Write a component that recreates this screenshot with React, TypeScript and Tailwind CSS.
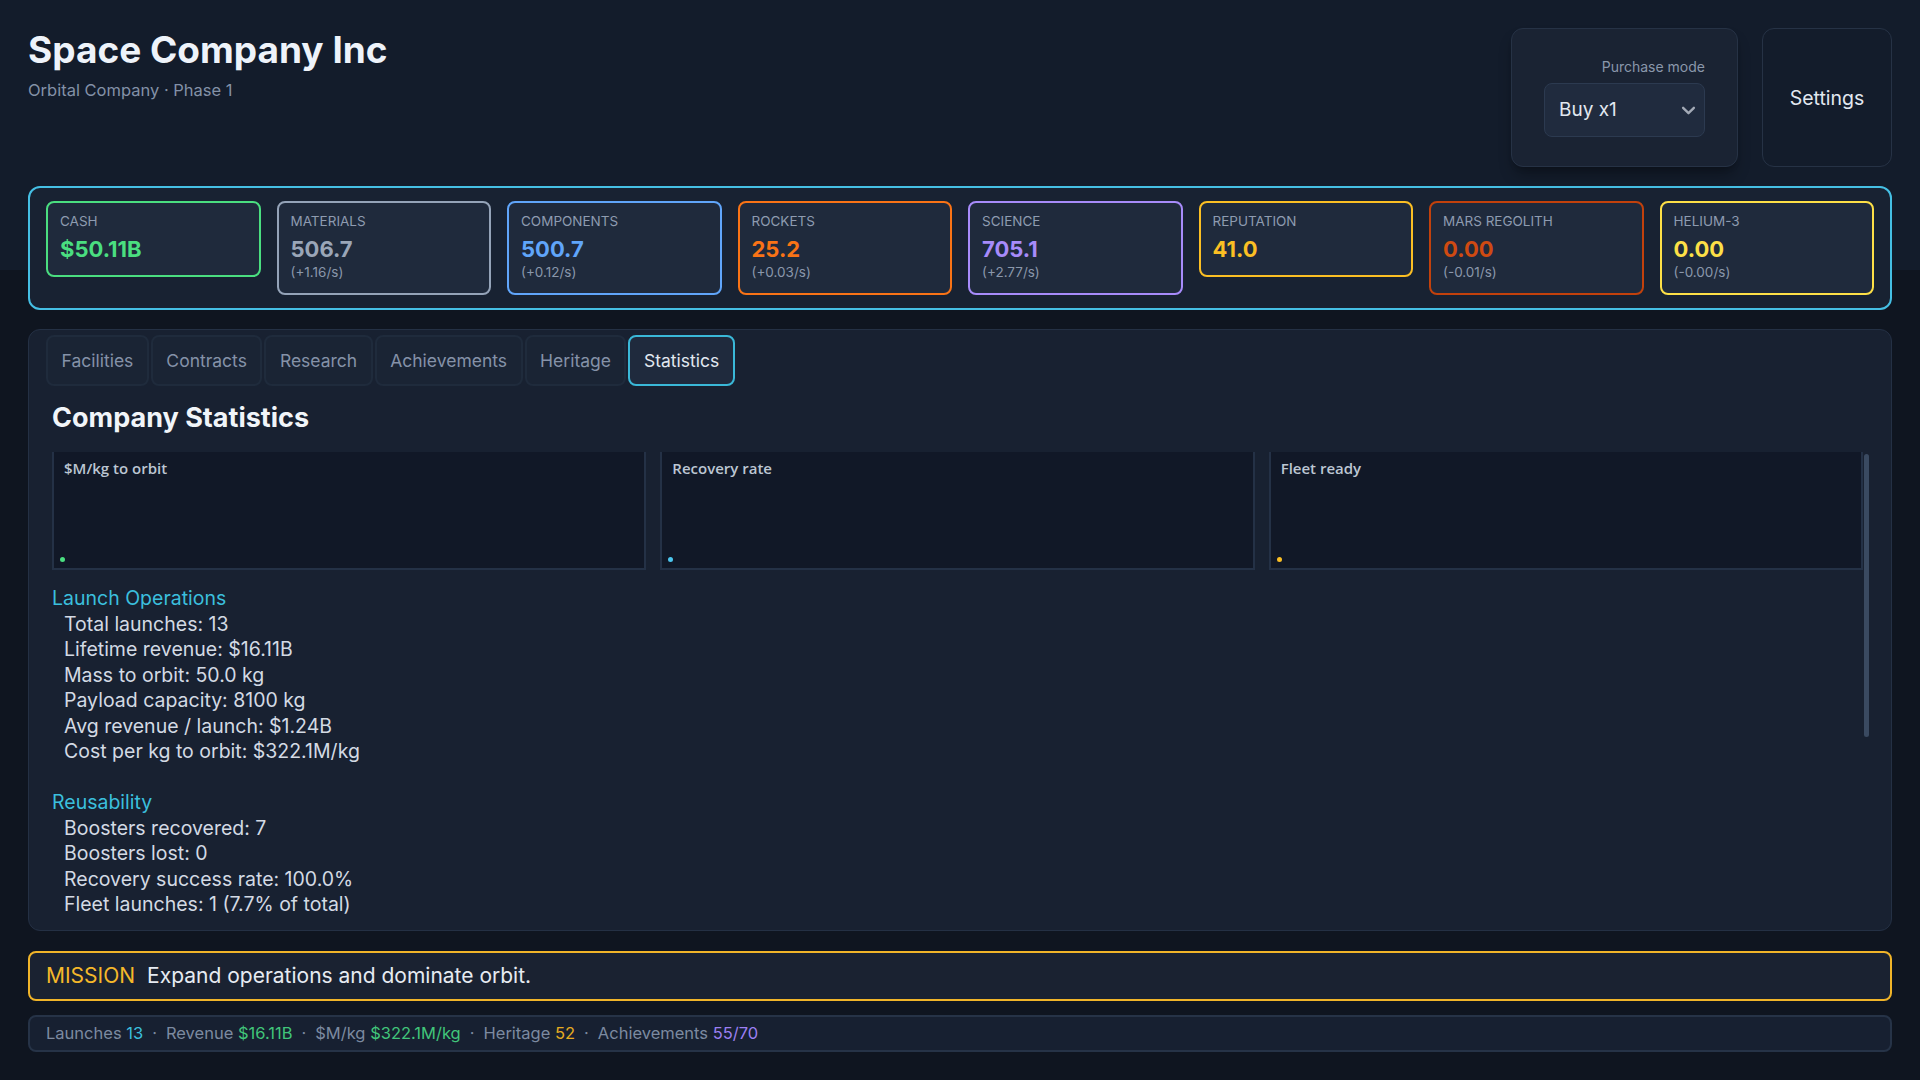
const resources = [
  { label: 'Cash', value: '$50.11B', border: 'border-[#4ade80]', text: 'text-[#4ade80]' },
  { label: 'Materials', value: '506.7', rate: '(+1.16/s)', border: 'border-[#94a3b8]', text: 'text-[#9aa6b8]' },
  { label: 'Components', value: '500.7', rate: '(+0.12/s)', border: 'border-[#60a5fa]', text: 'text-[#60a5fa]' },
  { label: 'Rockets', value: '25.2', rate: '(+0.03/s)', border: 'border-[#f97316]', text: 'text-[#f97316]' },
  { label: 'Science', value: '705.1', rate: '(+2.77/s)', border: 'border-[#a78bfa]', text: 'text-[#a78bfa]' },
  { label: 'Reputation', value: '41.0', border: 'border-[#fbbf24]', text: 'text-[#fbbf24]' },
  { label: 'Mars Regolith', value: '0.00', rate: '(-0.01/s)', border: 'border-[#c2410c]', text: 'text-[#cf4a12]' },
  { label: 'Helium-3', value: '0.00', rate: '(-0.00/s)', border: 'border-[#fde047]', text: 'text-[#fde047]' },
]

const tabs = ['Facilities', 'Contracts', 'Research', 'Achievements', 'Heritage', 'Statistics']

const charts = [
  { label: '$M/kg to orbit', dot: 'bg-[#4ade80]' },
  { label: 'Recovery rate', dot: 'bg-[#4cc6ee]' },
  { label: 'Fleet ready', dot: 'bg-[#fbbf24]' },
]

const sections = [
  {
    title: 'Launch Operations',
    lines: [
      'Total launches: 13',
      'Lifetime revenue: $16.11B',
      'Mass to orbit: 50.0 kg',
      'Payload capacity: 8100 kg',
      'Avg revenue / launch: $1.24B',
      'Cost per kg to orbit: $322.1M/kg',
    ],
  },
  {
    title: 'Reusability',
    lines: [
      'Boosters recovered: 7',
      'Boosters lost: 0',
      'Recovery success rate: 100.0%',
      'Fleet launches: 1 (7.7% of total)',
    ],
  },
]

export default function App() {
  return (
    <div className="min-h-screen bg-[#0f1520] bg-[linear-gradient(#131c2b_270px,#0f1520_270px)] px-7 font-['Inter',sans-serif] text-[#e2e8f0]">
      <header className="flex items-start justify-between pt-7">
        <div className="mt-0.5">
          <h1 className="text-[37px] leading-10 font-bold text-[#eef3fa]">Space Company Inc</h1>
          <p className="mt-2 text-[16.5px] leading-6 text-[#8391a7]">Orbital Company · Phase 1</p>
        </div>
        <div className="flex gap-6">
          <div className="flex h-[139px] w-[227px] flex-col items-end rounded-xl border border-[#263245] bg-[#1a2333] px-8 pt-7 shadow-lg shadow-black/30">
            <span className="text-sm leading-5 text-[#8a97ab]">Purchase mode</span>
            <div className="mt-1.5 flex h-[54px] w-full items-center justify-between rounded-lg border border-[#2c3a50] bg-[#202b3e] pr-2 pl-[14px]">
              <span className="text-[19px] text-[#e2e8f0]">Buy x1</span>
              <Chevron />
            </div>
          </div>
          <button className="flex h-[139px] w-[130px] items-center justify-center rounded-xl border border-[#263245] pt-0.5 text-[19.5px] text-[#e2e8f0]">
            Settings
          </button>
        </div>
      </header>

      <section className="mt-[19px] flex items-start gap-4 rounded-xl border-2 border-[#45bfe4] bg-[#182232] px-4 py-[13px]">
        {resources.map((r) => (
          <div key={r.label} className={`flex-1 rounded-lg border-2 ${r.border} bg-[#1f2a3c] px-3 pt-2 pb-3`}>
            <div className="text-[13.5px] leading-5 text-[#8e9bb0] uppercase">{r.label}</div>
            <div className={`mt-1 text-[22px] leading-7 font-bold ${r.text}`}>{r.value}</div>
            {r.rate && <div className="text-[13.5px] leading-[18px] text-[#8a97ab]">{r.rate}</div>}
          </div>
        ))}
      </section>

      <section className="mt-[19px] flex h-[602px] flex-col rounded-xl border border-[#243044] bg-[#182131] px-[17px] pt-[5px] pb-3">
        <nav className="flex gap-0.5">
          {tabs.map((t) => (
            <button
              key={t}
              className={
                t === 'Statistics'
                  ? 'rounded-lg border-2 border-[#3ab8d8] bg-[#1f2a3d] px-[13.5px] py-[9.5px] text-[17.5px] leading-7 text-[#e2e8f0]'
                  : 'rounded-lg border-2 border-[#1f2b3c] bg-[#1a2434] px-[13.5px] py-[9.5px] text-[17.5px] leading-7 text-[#8592a8]'
              }
            >
              {t}
            </button>
          ))}
        </nav>

        <h2 className="mt-4 ml-1.5 text-[27px] leading-8 font-bold text-[#f1f5f9]">Company Statistics</h2>

        <div className="relative mt-[18px] mr-[5px] ml-1.5 min-h-0 flex-1 overflow-hidden">
          <div className="pr-[6px]">
            <div className="grid grid-cols-3 gap-3.5">
              {charts.map((c) => (
                <div key={c.label} className="flex h-[118px] flex-col border-2 border-t-0 border-[#243146] bg-[#111827] pt-1.5 pl-2.5">
                  <span className="font-['Open_Sans',sans-serif] text-[15px] leading-5 font-semibold text-[#bcc6d3]">{c.label}</span>
                  <span className={`mt-auto mb-[6px] -ml-1 size-[5px] rounded-full ${c.dot}`} />
                </div>
              ))}
            </div>

            <div className="mt-4 text-[19.5px] leading-[25.5px]">
              {sections.map((s, i) => (
                <div key={s.title} className={i > 0 ? 'mt-[25.5px]' : ''}>
                  <div className="text-[#3bbfdd]">{s.title}</div>
                  {s.lines.map((l) => (
                    <div key={l} className="pl-3 text-[#d3dae4]">
                      {l}
                    </div>
                  ))}
                </div>
              ))}
            </div>
          </div>
          {/* scrollbar thumb */}
          <div className="absolute top-0.5 right-0 h-[283px] w-[5px] rounded-full bg-[#3a4a61]" />
        </div>
      </section>

      <div className="mt-5 flex items-center gap-3 rounded-lg border-2 border-[#f0b429] bg-[#1a2231] px-4 py-2 text-[21px] leading-[30px]">
        <span className="text-[#f5b82a]">MISSION</span>
        <span className="text-[#e6ebf2]">Expand operations and dominate orbit.</span>
      </div>

      <footer className="mt-3.5 rounded-lg border-2 border-[#263347] bg-[#172031] px-4 py-1 text-[16.5px] leading-[25px] text-[#7c8aa0]">
        Launches <span className="text-[#3bbfdd]">13</span>
        <Dot />
        Revenue <span className="text-[#41c57a]">$16.11B</span>
        <Dot />
        $M/kg <span className="text-[#41c57a]">$322.1M/kg</span>
        <Dot />
        Heritage <span className="text-[#e6ac21]">52</span>
        <Dot />
        Achievements <span className="text-[#9b7ff2]">55/70</span>
      </footer>
    </div>
  )
}

function Dot() {
  return <span className="mx-[9px]">·</span>
}

function Chevron() {
  return (
    <svg viewBox="0 0 16 10" className="h-[9px] w-[15px]" fill="none" stroke="#a3aab6" strokeWidth="2.6" strokeLinecap="round" strokeLinejoin="round" aria-hidden>
      <path d="M2 2l6 6 6-6" />
    </svg>
  )
}
